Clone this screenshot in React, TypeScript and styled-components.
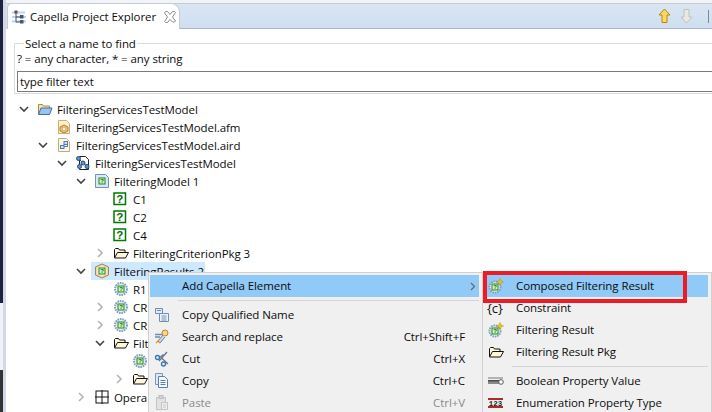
import React from "react";
import styled, { createGlobalStyle } from "styled-components";

const Global = createGlobalStyle`
  html, body { margin: 0; padding: 0; background: #fff; }
  body { font-family: "Open Sans", "Noto Sans", "Liberation Sans", sans-serif; font-size: 11.5px; letter-spacing: -0.08px; color: #0c0c0c; }
`;

const Page = styled.div`
  position: relative;
  width: 712px;
  height: 412px;
  overflow: hidden;
  display: flex;
  background: #fff;
`;
const Strip = styled.div`
  width: 3px;
  display: flex;
  flex-direction: column;
`;
const StripPart = styled.div<{ $h: number; $c: string }>`
  height: ${(p) => p.$h}px;
  background: ${(p) => p.$c};
`;
const Edge = styled.div`
  width: 3px;
  background: #d3d8e4;
`;
const Main = styled.div`
  flex: 1;
  min-width: 0;
  display: flex;
  flex-direction: column;
`;
const TopGap = styled.div`
  height: 3px;
  background: #f2f3f6;
`;
const TabBar = styled.div`
  height: 25px;
  flex: none;
  display: flex;
  align-items: stretch;
  border-top: 1px solid #c6ccd6;
  background: linear-gradient(#d8e5f3, #cfdfef);
`;
const Tab = styled.div`
  width: 173px;
  flex: none;
  margin-left: 1px;
  margin-top: -1px;
  height: 26px;
  box-sizing: border-box;
  background: #fff;
  border: 1px solid #c6ccd6;
  border-bottom: none;
  border-radius: 5px 9px 0 0;
  display: flex;
  align-items: center;
  padding-left: 3px;
  z-index: 1;
`;
const TabIcon = styled.span`
  width: 16px;
  height: 16px;
  flex: none;
  display: flex;
`;
const TabTitle = styled.span`
  margin-left: 3px;
  white-space: nowrap;
`;
const CloseBox = styled.span`
  margin-left: 8px;
  display: flex;
  flex: none;
`;
const TabFill = styled.div`
  flex: 1;
  display: flex;
  align-items: center;
  justify-content: flex-end;
  border-bottom: 1px solid #a9b7c9;
  gap: 9px;
  padding-right: 3px;
`;
const ToolSep = styled.div`
  width: 1px;
  height: 13px;
  background: #808890;
  margin-left: 6px;
`;
const Filter = styled.fieldset`
  margin: 7px 0 0 8px;
  padding: 0 0 0 2px;
  border: 1px solid #dcdcdc;
  border-right: none;
  min-width: 0;
  height: 58px;
  flex: none;
  box-sizing: border-box;
`;
const FilterLegend = styled.legend`
  padding: 0 1px;
  margin-left: 7px;
  line-height: 15px;
`;
const Hint = styled.div`
  line-height: 16px;
`;
const SearchInput = styled.div`
  margin-top: 4px;
  height: 21px;
  box-sizing: border-box;
  border: 1px solid #7a7a7a;
  border-right: none;
  padding-left: 2px;
  line-height: 19px;
`;
const Tree = styled.div`
  margin-top: 6px;
  display: flex;
  flex-direction: column;
`;
const Row = styled.div<{ $level: number }>`
  height: 18px;
  flex: none;
  display: flex;
  align-items: center;
  padding-left: ${(p) => 13 + p.$level * 19}px;
  white-space: nowrap;
`;
const Twist = styled.span`
  width: 18px;
  height: 18px;
  display: flex;
  align-items: center;
  justify-content: flex-start;
  flex: none;
`;
const RowIcon = styled.span`
  width: 16px;
  height: 16px;
  display: flex;
  flex: none;
`;
const RowLabel = styled.span<{ $on?: boolean }>`
  margin-left: ${(p) => (p.$on ? 0 : 4)}px;
`;
const Selected = styled.span`
  display: flex;
  align-items: center;
  gap: 4px;
  height: 18px;
  background: #cde8ff;
  width: 114px;
  margin-left: -3px;
  padding-left: 3px;
  box-sizing: border-box;
`;
const Menu = styled.div<{ $x: number; $w: number }>`
  position: absolute;
  left: ${(p) => p.$x}px;
  top: 272px;
  width: ${(p) => p.$w}px;
  height: 140px;
  box-sizing: border-box;
  background: #f0f0f0;
  border: 1px solid #d0d0d0;
  border-bottom: none;
  padding-top: 2px;
  color: #0c0c0c;
`;
const Item = styled.div<{ $hot?: boolean; $off?: boolean }>`
  position: relative;
  height: 22px;
  margin: 0 3px 0 1px;
  display: flex;
  align-items: center;
  background: ${(p) => (p.$hot ? "#91c9f7" : "transparent")};
  color: ${(p) => (p.$off ? "#8a8a8a" : "inherit")};
`;
const ItemIcon = styled.span`
  width: 32px;
  padding-left: 4px;
  box-sizing: border-box;
  display: flex;
  flex: none;
  height: 16px;
`;
const ItemText = styled.span`
  flex: 1;
  white-space: nowrap;
  position: relative;
  top: -1px;
`;
const Keys = styled.span`
  white-space: nowrap;
  margin-right: 14px;
  position: relative;
  top: -1px;
`;
const Arrow = styled.span`
  width: 12px;
  margin-right: 3px;
  display: flex;
  justify-content: flex-end;
`;
const MenuSep = styled.div<{ $left: number }>`
  height: 1px;
  background: #d4d4d4;
  margin: 3px 3px 3px ${(p) => p.$left}px;
`;
const BraceGlyph = styled.span`
  font-size: 13px;
  line-height: 16px;
  color: #111;
  white-space: nowrap;
  margin-left: -1px;
`;
const RedMark = styled.div`
  position: absolute;
  left: -1px;
  top: -4px;
  width: 204px;
  height: 32px;
  box-sizing: border-box;
  border: 4px solid #ed1c24;
  pointer-events: none;
`;

const Chevron = ({ open }: { open?: boolean }) => (
  <svg width="10" height="10" viewBox="0 0 10 10" fill="none">
    {open ? (
      <path d="M1 3 L5 7 L9 3" stroke="#444" strokeWidth="1.6" />
    ) : (
      <path d="M3 1 L7 5 L3 9" stroke="#b4b4b4" strokeWidth="1.6" />
    )}
  </svg>
);
const MenuArrow = () => (
  <svg width="6" height="9" viewBox="0 0 6 9" fill="none">
    <path d="M1 1 L4.5 4.5 L1 8" stroke="#5a6570" strokeWidth="1.1" />
  </svg>
);

const S = ({ children }: { children: React.ReactNode }) => (
  <svg width="16" height="16" viewBox="0 0 16 16" fill="none">
    {children}
  </svg>
);

const QBox = ({ x, y, s = 7 }: { x: number; y: number; s?: number }) => (
  <g>
    <rect x={x + 0.5} y={y + 0.5} width={s - 1} height={s - 1} fill="#d9f0c8" stroke="#1c8a1c" />
    <text x={x + s / 2} y={y + s - 1.3} fontSize={s - 1} fontWeight="700" fontFamily="Liberation Sans" textAnchor="middle" fill="#0a6a0a">?</text>
  </g>
);

const icons: Record<string, React.ReactNode> = {
  tabTree: (
    <S>
      <path d="M1 3.5h13M1 8h14M1 12.5h14" stroke="#bcd3ee" strokeWidth="2" />
      <path d="M5 4v9h4M5 8h4" stroke="#44505c" />
      <rect x="3.5" y="1.5" width="3" height="3" fill="#4c5660" />
      <rect x="9" y="6" width="3.5" height="3.5" fill="#4c5660" />
      <rect x="9" y="11" width="3.5" height="3.5" fill="#4c5660" />
    </S>
  ),
  project: (
    <S>
      <path d="M1.5 13.5V3.5h4l1 1.5h6v2" fill="#f4e3b0" stroke="#b08a3c" />
      <path d="M1.5 13.5L4 7h11l-2.5 6.5z" fill="#9cc3ec" stroke="#3f6fa8" />
    </S>
  ),
  afm: (
    <S>
      <path d="M2.5 1.5h8l3 3v10h-11z" fill="#fbf0d2" stroke="#d0ae68" />
      <path d="M8 6l4 2v4l-4 2-4-2V8z" fill="#e8c078" stroke="#b08238" />
      <rect x="6.5" y="8.5" width="3" height="3" fill="#fbf6e2" stroke="#c89a4c" strokeWidth="0.5" />
    </S>
  ),
  aird: (
    <S>
      <path d="M2.5 1.5h8l3 3v10h-11z" fill="#fbf6e6" stroke="#c0ac7c" />
      <rect x="8" y="4.5" width="3.5" height="3" fill="#cfe0f4" stroke="#4c7cb4" />
      <rect x="4.5" y="8.5" width="3.5" height="3" fill="#cfe0f4" stroke="#4c7cb4" />
      <path d="M8 9.5h3.5V8" stroke="#4c7cb4" />
    </S>
  ),
  diagram: (
    <S>
      <path d="M4.5 1.5h6l3 3v10h-9z" fill="#fff" stroke="#222" />
      <path d="M4 4l4 4 -3 3M8 8l4 3" stroke="#336" />
      <circle cx="3.5" cy="3.5" r="2" fill="#5d93cf" stroke="#27507e" />
      <circle cx="8" cy="8" r="2" fill="#5d93cf" stroke="#27507e" />
      <circle cx="4.5" cy="11.5" r="2" fill="#5d93cf" stroke="#27507e" />
      <circle cx="12" cy="11.5" r="2" fill="#5d93cf" stroke="#27507e" />
    </S>
  ),
  model: (
    <S>
      <path d="M1.5 1.5h10l3 3v10h-13z" fill="#d8e7f6" stroke="#6f93bb" />
      <QBox x={4.5} y={4.5} />
    </S>
  ),
  q: (
    <S>
      <rect x="1" y="2" width="11.5" height="11.5" fill="#fff" stroke="#007a00" strokeWidth="1.5" />
      <text x="6.8" y="11.7" fontSize="11.5" fontWeight="700" fontFamily="Liberation Sans" textAnchor="middle" fill="#007000">?</text>
    </S>
  ),
  folder: (
    <S>
      <path d="M1.5 12.5V4.5l1-1h3l1 1.5h5.5v2" fill="#fff6dc" stroke="#111" />
      <path d="M1.5 13L4.5 7.5h11L12.5 13z" fill="#fff6dc" stroke="#111" />
    </S>
  ),
  results: (
    <S>
      <path d="M8 1l6.5 3v8L8 15l-6.5-3V4z" fill="#f0d8a4" stroke="#a8844c" />
      <path d="M8 3l4.5 2v6L8 13 3.5 11V5z" fill="#fbf3de" />
      <QBox x={4.5} y={4.5} />
    </S>
  ),
  result: (
    <S>
      <circle cx="8" cy="8" r="6" fill="#e4eef6" stroke="#7f9fbe" strokeWidth="2" strokeDasharray="1.6 0.8" />
      <QBox x={4.5} y={4.5} />
    </S>
  ),
  resultNew: (
    <S>
      <circle cx="7" cy="9" r="5.6" fill="#e4eef6" stroke="#7f9fbe" strokeWidth="1.9" strokeDasharray="1.6 0.8" />
      <QBox x={3.5} y={5.5} />
      <path d="M12 0.5l1 2.5 2.5 1-2.5 1-1 2.5-1-2.5-2.5-1 2.5-1z" fill="#f2c21e" stroke="#b98a10" strokeWidth="0.5" />
    </S>
  ),
  operation: (
    <S>
      <rect x="2" y="2" width="12" height="12" stroke="#111" />
      <path d="M8 1v14M1 8h14" stroke="#111" />
    </S>
  ),
  copyName: (
    <S>
      <path d="M1.5 1.5h7v5h-7z" fill="#e0ebf7" stroke="#6e8fb2" />
      <path d="M5.5 6.5h9v8h-9z" fill="#eef4fb" stroke="#6e8fb2" />
      <path d="M3 3.5h4M7.5 9h5M7.5 11h5M7.5 13h5" stroke="#6e8fb2" />
    </S>
  ),
  search: (
    <S>
      <path d="M1 5.5h7M1 8h5" stroke="#6c8bb0" strokeWidth="1.5" />
      <circle cx="11" cy="4" r="3" fill="#f5d68a" stroke="#b8862c" />
      <path d="M9 6l-5 6 2 2 5-6" fill="#cfd8e4" stroke="#6c7c90" />
      <path d="M2 14l2-2 2 2" stroke="#d89a2a" strokeWidth="1.4" />
    </S>
  ),
  cut: (
    <S>
      <path d="M13 1L5 10M7 6.5L14 13" stroke="#6a7480" strokeWidth="1.3" />
      <path d="M9.5 3.5L5 7" stroke="#6a7480" strokeWidth="1.2" />
      <circle cx="3.5" cy="6.5" r="2" stroke="#3b76b4" strokeWidth="1.4" />
      <circle cx="9.5" cy="13" r="2" stroke="#3b76b4" strokeWidth="1.4" />
    </S>
  ),
  copy: (
    <S>
      <path d="M1.5 0.5h7v11h-7z" fill="#dde8f4" stroke="#7a98b8" />
      <path d="M4.5 3.5h6l3 3v8h-9z" fill="#f4f8fc" stroke="#5c7fa4" />
      <path d="M6.5 7.5h5M6.5 9.5h5M6.5 11.5h5" stroke="#5c7fa4" />
    </S>
  ),
  paste: (
    <S>
      <path d="M2.5 2.5h9v12h-9z" fill="#e2e2e2" stroke="#c4c4c4" />
      <rect x="5" y="0.5" width="4" height="3" fill="#d4d4d4" stroke="#bcbcbc" />
      <path d="M7.5 7.5h6v7h-6z" fill="#efefef" stroke="#c4c4c4" />
      <path d="M9 10h3M9 12h3" stroke="#c8c8c8" />
    </S>
  ),
  bool: (
    <S>
      <path d="M0 5h15" stroke="#777" strokeWidth="1" />
      <rect x="0" y="7" width="11" height="4" fill="#8a8a8a" />
      <rect x="0" y="7" width="11" height="1.5" fill="#4c4c4c" />
      <circle cx="13" cy="9" r="2.3" fill="#fff" stroke="#555" />
    </S>
  ),
  enumType: (
    <S>
      <rect x="0" y="3" width="15" height="2" fill="#b02a2a" />
      <rect x="0" y="11" width="15" height="2" fill="#b02a2a" />
      <text x="7.5" y="10.8" fontSize="7.5" fontWeight="700" fontFamily="Liberation Mono" textAnchor="middle" fill="#222">123</text>
    </S>
  ),
};

const Up = () => (
  <svg width="13" height="16" viewBox="0 0 13 16">
    <path d="M6.5 1L12 7H9v7.5H4V7H1z" fill="#ffd75e" stroke="#b8860b" />
  </svg>
);
const Down = () => (
  <svg width="13" height="16" viewBox="0 0 13 16">
    <path d="M6.5 15L12 9H9V1.5H4V9H1z" fill="#e8e8e4" stroke="#c2c2bc" />
  </svg>
);
const CloseIcon = () => (
  <svg width="12" height="12" viewBox="0 0 12 12" fill="#fff" stroke="#8c8c8c">
    <path d="M1.5 0.5h2L6 3.5l2.5-3h2l1 1-3 4.5 3 4-1 1h-2L6 8.5l-2.5 3h-2l-1-1 3-4.5-3-4z" />
  </svg>
);

type TreeRow = { level: number; twist?: "open" | "closed"; icon: string; label: string; selected?: boolean };

const rows: TreeRow[] = [
  { level: 0, twist: "open", icon: "project", label: "FilteringServicesTestModel" },
  { level: 1, icon: "afm", label: "FilteringServicesTestModel.afm" },
  { level: 1, twist: "open", icon: "aird", label: "FilteringServicesTestModel.aird" },
  { level: 2, twist: "open", icon: "diagram", label: "FilteringServicesTestModel" },
  { level: 3, twist: "open", icon: "model", label: "FilteringModel 1" },
  { level: 4, icon: "q", label: "C1" },
  { level: 4, icon: "q", label: "C2" },
  { level: 4, icon: "q", label: "C4" },
  { level: 4, twist: "closed", icon: "folder", label: "FilteringCriterionPkg 3" },
  { level: 3, twist: "open", icon: "results", label: "FilteringResults 2", selected: true },
  { level: 4, icon: "result", label: "R1" },
  { level: 4, twist: "closed", icon: "result", label: "CR" },
  { level: 4, twist: "closed", icon: "result", label: "CR" },
  { level: 4, twist: "open", icon: "folder", label: "Filt" },
  { level: 5, icon: "result", label: "" },
  { level: 5, twist: "closed", icon: "folder", label: "" },
  { level: 3, twist: "closed", icon: "operation", label: "Opera" },
];

const editItems = [
  { icon: "copyName", label: "Copy Qualified Name" },
  { icon: "search", label: "Search and replace", keys: "Ctrl+Shift+F" },
  { icon: "cut", label: "Cut", keys: "Ctrl+X" },
  { icon: "copy", label: "Copy", keys: "Ctrl+C" },
  { icon: "paste", label: "Paste", keys: "Ctrl+V", off: true },
];

export default function App() {
  return (
    <Page>
      <Global />
      <Strip>
        <StripPart $h={303} $c="#1b2340" />
        <StripPart $h={67} $c="#f0f1f8" />
        <StripPart $h={42} $c="#333336" />
      </Strip>
      <Edge />
      <Main>
        <TopGap />
        <TabBar>
          <Tab>
            <TabIcon>{icons.tabTree}</TabIcon>
            <TabTitle>Capella Project Explorer</TabTitle>
            <CloseBox>
              <CloseIcon />
            </CloseBox>
          </Tab>
          <TabFill>
            <Up />
            <Down />
            <ToolSep />
          </TabFill>
        </TabBar>
        <Filter>
          <FilterLegend>Select a name to find</FilterLegend>
          <Hint>? = any character, * = any string</Hint>
          <SearchInput>type filter text</SearchInput>
        </Filter>
        <Tree>
          {rows.map((r, i) => (
            <Row key={i} $level={r.level}>
              <Twist>{r.twist && <Chevron open={r.twist === "open"} />}</Twist>
              {r.selected ? (
                <Selected>
                  <RowIcon>{icons[r.icon]}</RowIcon>
                  <RowLabel $on>{r.label}</RowLabel>
                </Selected>
              ) : (
                <>
                  <RowIcon>{icons[r.icon]}</RowIcon>
                  <RowLabel>{r.label}</RowLabel>
                </>
              )}
            </Row>
          ))}
        </Tree>
      </Main>
      <Menu $x={148} $w={335}>
        <Item $hot>
          <ItemIcon />
          <ItemText>Add Capella Element</ItemText>
          <Arrow>
            <MenuArrow />
          </Arrow>
        </Item>
        <MenuSep $left={29} />
        {editItems.map((it) => (
          <Item key={it.label} $off={it.off}>
            <ItemIcon>{icons[it.icon]}</ItemIcon>
            <ItemText>{it.label}</ItemText>
            {it.keys && <Keys>{it.keys}</Keys>}
          </Item>
        ))}
      </Menu>
      <Menu $x={482} $w={230}>
        <Item $hot>
          <ItemIcon>{icons.resultNew}</ItemIcon>
          <ItemText>Composed Filtering Result</ItemText>
          <RedMark />
        </Item>
        <Item>
          <ItemIcon>
            <BraceGlyph>{"{c}"}</BraceGlyph>
          </ItemIcon>
          <ItemText>Constraint</ItemText>
        </Item>
        <Item>
          <ItemIcon>{icons.resultNew}</ItemIcon>
          <ItemText>Filtering Result</ItemText>
        </Item>
        <Item>
          <ItemIcon>{icons.folder}</ItemIcon>
          <ItemText>Filtering Result Pkg</ItemText>
        </Item>
        <MenuSep $left={29} />
        <Item>
          <ItemIcon>{icons.bool}</ItemIcon>
          <ItemText>Boolean Property Value</ItemText>
        </Item>
        <Item>
          <ItemIcon>{icons.enumType}</ItemIcon>
          <ItemText>Enumeration Property Type</ItemText>
        </Item>
      </Menu>
    </Page>
  );
}
